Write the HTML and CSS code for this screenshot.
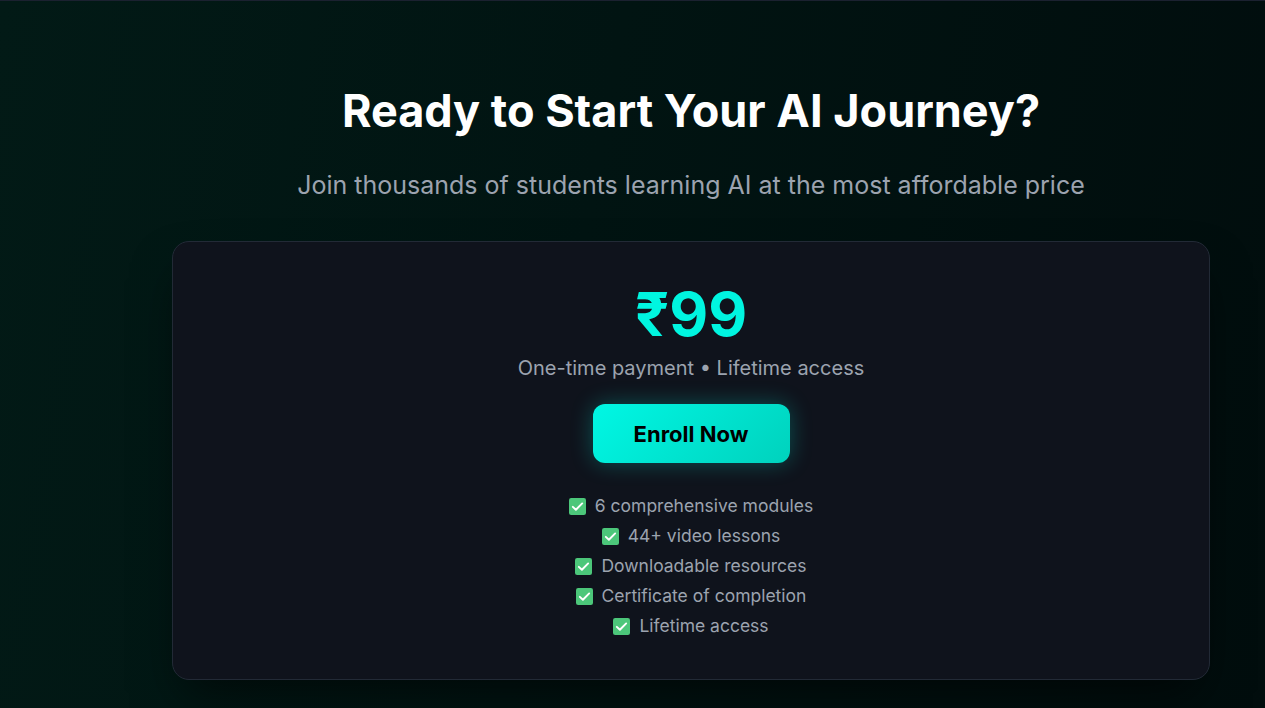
FILE: index.html
```html
<!DOCTYPE html>
<html lang="en">
<head>
<meta charset="utf-8">
<title>Ready to Start Your AI Journey?</title>
<link rel="stylesheet" href="styles.css">
</head>
<body>
<section class="cta">
  <div class="cta-inner">
    <h2 class="cta-title">Ready to Start Your AI Journey?</h2>
    <p class="cta-sub">Join thousands of students learning AI at the most affordable price</p>
    <div class="price-card">
      <div class="price">₹99</div>
      <p class="price-note">One-time payment • Lifetime access</p>
      <button class="enroll">Enroll Now</button>
      <ul class="features">
        <li><svg class="check" viewBox="0 0 16 16"><rect x="0" y="0" width="16" height="16" rx="2" fill="#4cc77a"/><path d="M3.6 8.3l2.9 2.8 5.9-6" fill="none" stroke="#fff" stroke-width="1.8" stroke-linecap="round" stroke-linejoin="round"/></svg>6 comprehensive modules</li>
        <li><svg class="check" viewBox="0 0 16 16"><rect x="0" y="0" width="16" height="16" rx="2" fill="#4cc77a"/><path d="M3.6 8.3l2.9 2.8 5.9-6" fill="none" stroke="#fff" stroke-width="1.8" stroke-linecap="round" stroke-linejoin="round"/></svg>44+ video lessons</li>
        <li><svg class="check" viewBox="0 0 16 16"><rect x="0" y="0" width="16" height="16" rx="2" fill="#4cc77a"/><path d="M3.6 8.3l2.9 2.8 5.9-6" fill="none" stroke="#fff" stroke-width="1.8" stroke-linecap="round" stroke-linejoin="round"/></svg>Downloadable resources</li>
        <li><svg class="check" viewBox="0 0 16 16"><rect x="0" y="0" width="16" height="16" rx="2" fill="#4cc77a"/><path d="M3.6 8.3l2.9 2.8 5.9-6" fill="none" stroke="#fff" stroke-width="1.8" stroke-linecap="round" stroke-linejoin="round"/></svg>Certificate of completion</li>
        <li><svg class="check" viewBox="0 0 16 16"><rect x="0" y="0" width="16" height="16" rx="2" fill="#4cc77a"/><path d="M3.6 8.3l2.9 2.8 5.9-6" fill="none" stroke="#fff" stroke-width="1.8" stroke-linecap="round" stroke-linejoin="round"/></svg>Lifetime access</li>
      </ul>
    </div>
  </div>
</section>
</body>
</html>
```

FILE: styles.css
```css
* { box-sizing: border-box; }
html, body { margin: 0; padding: 0; }
body {
  font-family: Inter, "Noto Sans", sans-serif;
  background: #010f0f;
  min-height: 708px;
}
.cta {
  min-height: 708px;
  border-top: 1px solid #1b2130;
  background: linear-gradient(100deg, #021a16 0%, #011412 45%, #010d0d 100%);
  padding: 82px 55px 40px 172px;
}
.cta-inner {
  max-width: 1038px;
  margin: 0 auto;
  text-align: center;
}
.cta-title {
  margin: 0;
  color: #ffffff;
  font-size: 45px;
  line-height: 56px;
  font-weight: 700;
}
.cta-sub {
  margin: 30px 0 0;
  color: #9ca3af;
  font-size: 25px;
  line-height: 32px;
  font-weight: 400;
}
.price-card {
  margin-top: 40px;
  background: #0f131c;
  border: 1px solid #222a36;
  border-radius: 17px;
  box-shadow: 0 25px 50px -12px rgba(0,0,0,0.6);
  padding: 36px 20px 38px;
  display: flex;
  flex-direction: column;
  align-items: center;
}
.price {
  color: #00f5e0;
  font-size: 60px;
  line-height: 72px;
  font-weight: 700;
}
.price-note {
  margin: 4px 0 0;
  color: #9ca3af;
  font-size: 20px;
  line-height: 28px;
}
.enroll {
  margin-top: 22px;
  width: 197px;
  height: 59px;
  border: 0;
  border-radius: 12px;
  background: linear-gradient(135deg, #00f7e4 0%, #00d2bd 100%);
  color: #000;
  font-family: inherit;
  font-size: 22px;
  font-weight: 700;
  box-shadow: 0 0 22px rgba(0, 245, 224, 0.28);
  cursor: pointer;
}
.features {
  list-style: none;
  margin: 28px 0 0;
  padding: 0;
  display: flex;
  flex-direction: column;
  align-items: center;
  gap: 0;
}
.features li {
  display: flex;
  align-items: center;
  gap: 9px;
  color: #9ca3af;
  font-size: 17.5px;
  line-height: 30px;
}
.check {
  width: 17px;
  height: 17px;
  flex: none;
}
```
